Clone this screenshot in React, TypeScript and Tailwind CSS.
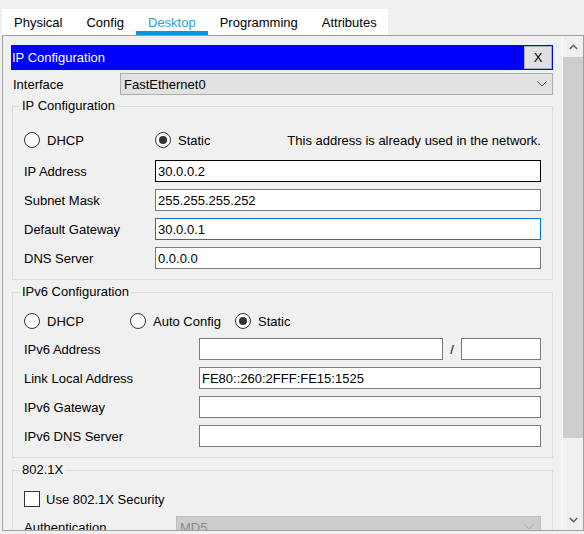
import React from 'react';

const tabs = ['Physical', 'Config', 'Desktop', 'Programming', 'Attributes'];

const Radio = ({ checked = false }: { checked?: boolean }) => (
  <span className="w-4 h-4 shrink-0 rounded-full border border-[#333333] bg-white flex items-center justify-center">
    {checked && <span className="w-2 h-2 rounded-full bg-[#333333]" />}
  </span>
);

const DownChevron = ({ color = '#555555' }: { color?: string }) => (
  <svg width="10" height="6" viewBox="0 0 10 6">
    <path d="M0.5 0.5 L5 5 L9.5 0.5" fill="none" stroke={color} strokeWidth="1" />
  </svg>
);

const TextBox = ({ value = '', tone = 'normal', className = '' }: { value?: string; tone?: 'normal' | 'active' | 'focus'; className?: string }) => {
  const border =
    tone === 'active' ? 'border-black' : tone === 'focus' ? 'border-[#0078d7]' : 'border-[#7a7a7a]';
  return (
    <div className={`h-[22px] bg-white border ${border} flex items-center pl-[2px] whitespace-nowrap overflow-hidden ${className}`}>
      {value}
    </div>
  );
};

const Row = ({ label, labelWidth, children }: { label: string; labelWidth: string; children: React.ReactNode }) => (
  <div className="flex items-center">
    <span className={`${labelWidth} shrink-0`}>{label}</span>
    {children}
  </div>
);

export default function App() {
  return (
    <div className="w-[584px] h-[534px] bg-[#f0f0f0] overflow-hidden font-['Liberation_Sans',Arial,sans-serif] text-[13px] leading-[15px] text-black">
      {/* Tabs */}
      <div className="pt-[9px] pl-[2px]">
        <div className="w-[386px] h-[26px] bg-white flex">
          {tabs.map((t) => (
            <div
              key={t}
              className={
                t === 'Desktop'
                  ? 'px-3 h-full flex items-center text-[#2b9fd9] shadow-[inset_0_-4px_0_#0097d7]'
                  : 'px-3 h-full flex items-center'
              }
            >
              {t}
            </div>
          ))}
        </div>
      </div>

      {/* Panel */}
      <div className="ml-[2px] w-[582px] h-[496px] border border-[#a0a0a0] flex">
        <div className="w-[559px] h-full overflow-hidden pl-[8px] pr-[9px] pt-[9px]">
          {/* Title bar */}
          <div className="h-[25px] bg-[#0000ff] flex items-center justify-between px-[1px] text-white">
            <span>IP Configuration</span>
            <button className="w-[28px] h-[23px] bg-[#e1e1e1] border border-[#adadad] text-black flex items-center justify-center">
              X
            </button>
          </div>

          {/* Interface */}
          <div className="mt-[3px] flex items-center">
            <span className="w-[109px] pl-[2px] shrink-0">Interface</span>
            <div className="flex-1 h-[22px] bg-[#e1e1e1] border border-[#adadad] flex items-center justify-between pl-[3px] pr-[5px]">
              <span>FastEthernet0</span>
              <DownChevron />
            </div>
          </div>

          {/* IPv4 */}
          <fieldset className="mt-[3px] ml-[1px] border border-[#dcdcdc]">
            <legend className="ml-[7px] px-[2px] leading-[16px]">IP Configuration</legend>
            <div className="px-[11px] pb-[10px]">
              <div className="mt-[15px] h-[22px] flex items-center">
                <div className="w-[131px] flex items-center gap-[7px]">
                  <Radio />
                  <span>DHCP</span>
                </div>
                <div className="flex items-center gap-[7px]">
                  <Radio checked />
                  <span>Static</span>
                </div>
                <span className="ml-auto">This address is already used in the network.</span>
              </div>
              <div className="mt-[9px] flex flex-col gap-[7px]">
                <Row label="IP Address" labelWidth="w-[131px]">
                  <TextBox value="30.0.0.2" tone="active" className="flex-1" />
                </Row>
                <Row label="Subnet Mask" labelWidth="w-[131px]">
                  <TextBox value="255.255.255.252" className="flex-1" />
                </Row>
                <Row label="Default Gateway" labelWidth="w-[131px]">
                  <TextBox value="30.0.0.1" tone="focus" className="flex-1" />
                </Row>
                <Row label="DNS Server" labelWidth="w-[131px]">
                  <TextBox value="0.0.0.0" className="flex-1" />
                </Row>
              </div>
            </div>
          </fieldset>

          {/* IPv6 */}
          <fieldset className="mt-[4px] ml-[1px] border border-[#dcdcdc]">
            <legend className="ml-[7px] px-[2px] leading-[16px]">IPv6 Configuration</legend>
            <div className="px-[11px] pb-[10px]">
              <div className="mt-[10px] h-[22px] flex items-center">
                <div className="w-[106px] flex items-center gap-[7px]">
                  <Radio />
                  <span>DHCP</span>
                </div>
                <div className="w-[105px] flex items-center gap-[7px]">
                  <Radio />
                  <span>Auto Config</span>
                </div>
                <div className="flex items-center gap-[7px]">
                  <Radio checked />
                  <span>Static</span>
                </div>
              </div>
              <div className="mt-[6px] flex flex-col gap-[7px]">
                <Row label="IPv6 Address" labelWidth="w-[175px]">
                  <TextBox className="w-[244px]" />
                  <span className="w-[18px] text-center">/</span>
                  <TextBox className="flex-1" />
                </Row>
                <Row label="Link Local Address" labelWidth="w-[175px]">
                  <TextBox value="FE80::260:2FFF:FE15:1525" className="flex-1" />
                </Row>
                <Row label="IPv6 Gateway" labelWidth="w-[175px]">
                  <TextBox className="flex-1" />
                </Row>
                <Row label="IPv6 DNS Server" labelWidth="w-[175px]">
                  <TextBox className="flex-1" />
                </Row>
              </div>
            </div>
          </fieldset>

          {/* 802.1X */}
          <fieldset className="mt-[4px] ml-[1px] border border-[#dcdcdc]">
            <legend className="ml-[7px] px-[2px] leading-[16px]">802.1X</legend>
            <div className="px-[11px] pb-[10px]">
              <div className="mt-[10px] h-[22px] flex items-center gap-[6px]">
                <span className="w-4 h-4 shrink-0 border border-[#333333] bg-white" />
                <span>Use 802.1X Security</span>
              </div>
              <div className="mt-[6px] flex items-center">
                <span className="w-[152px] shrink-0">Authentication</span>
                <div className="flex-1 h-[22px] bg-[#cccccc] border border-[#bfbfbf] flex items-center justify-between pl-[3px] pr-[6px] text-[#8a8a8a]">
                  <span>MD5</span>
                  <DownChevron color="#a8a8a8" />
                </div>
              </div>
            </div>
          </fieldset>
        </div>

        {/* Scrollbar */}
        <div className="w-[21px] h-full border-l border-[#fafafa] flex flex-col">
          <div className="h-[21px] flex items-center justify-center">
            <svg width="9" height="6" viewBox="0 0 9 6">
              <path d="M0.8 5 L4.5 1.3 L8.2 5" fill="none" stroke="#606060" strokeWidth="1.6" />
            </svg>
          </div>
          <div className="h-[381px] bg-[#cdcdcd]" />
          <div className="flex-1" />
          <div className="h-[21px] flex items-center justify-center">
            <svg width="9" height="6" viewBox="0 0 9 6">
              <path d="M0.8 1 L4.5 4.7 L8.2 1" fill="none" stroke="#606060" strokeWidth="1.6" />
            </svg>
          </div>
        </div>
      </div>
    </div>
  );
}
